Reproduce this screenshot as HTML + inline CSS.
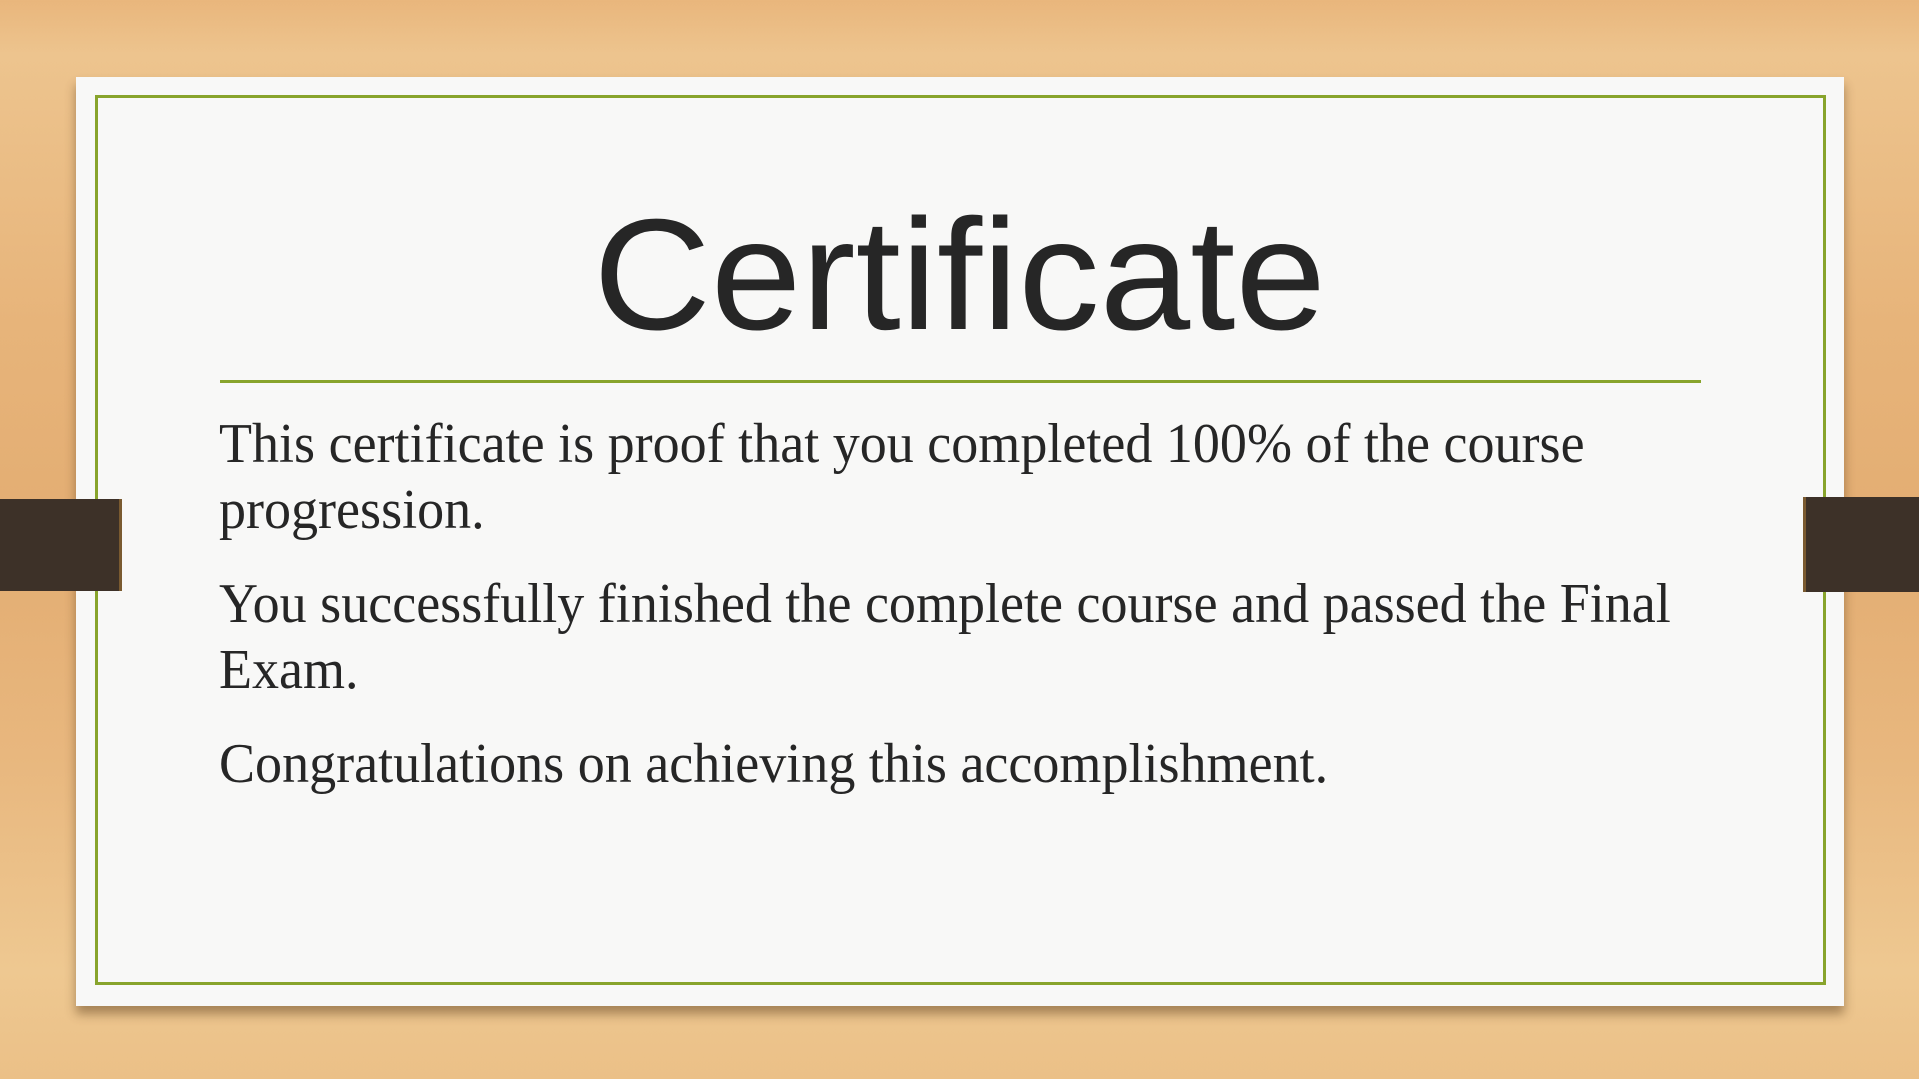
<!DOCTYPE html>
<html><head><meta charset="utf-8"><style>
html,body{margin:0;padding:0}
body{width:1919px;height:1079px;overflow:hidden;position:relative;
background:linear-gradient(180deg,#e9b67c 0%,#edc48e 5%,#e7b47a 30%,#e3ad72 50%,#e8b77e 70%,#eec891 90%,#ebc087 100%);}
.paper{position:absolute;left:76px;top:77px;width:1768px;height:929px;background:#f8f8f7;
box-shadow:0 8px 10px rgba(80,50,20,.45);}
.frame{position:absolute;left:95px;top:95px;width:1725px;height:884px;border:3px solid #88a42c;}
.band{position:absolute;background:#3d3128;}
.title{position:absolute;left:0;width:1919px;top:196px;text-align:center;font-family:"Liberation Sans",sans-serif;font-size:158px;line-height:158px;color:#262626;}
.title span{display:inline-block;transform:scaleX(1.03);}
.rule{position:absolute;left:220px;top:380px;width:1481px;height:3px;background:#88a42c;}
.t{position:absolute;left:219px;font-family:"Liberation Serif",serif;font-size:56px;line-height:56px;color:#262626;white-space:nowrap;transform-origin:left;transform:scaleX(0.965);}
</style></head><body>
<div class="paper"></div>
<div class="frame"></div>
<div class="band" style="left:0;top:499px;width:119px;height:92px;border-right:3px solid #7a5a30"></div>
<div class="band" style="left:1803px;top:497px;width:116px;height:95px;border-left:3px solid #7a5a30"></div>
<div class="title"><span>Certificate</span></div>
<div class="rule"></div>
<div class="t" style="top:416px">This certificate is proof that you completed 100% of the course</div>
<div class="t" style="top:482px">progression.</div>
<div class="t" style="top:576px">You successfully finished the complete course and passed the Final</div>
<div class="t" style="top:642px">Exam.</div>
<div class="t" style="top:736px">Congratulations on achieving this accomplishment.</div>
</body></html>
